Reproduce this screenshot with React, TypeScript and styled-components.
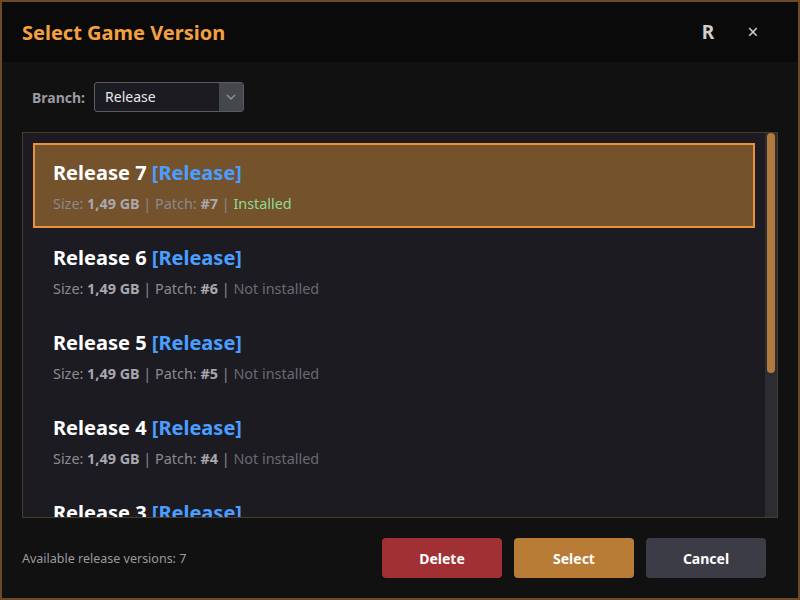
import React from "react";
import styled, { createGlobalStyle } from "styled-components";

const Global = createGlobalStyle`
  html, body { margin: 0; padding: 0; background: #111111; }
  * { box-sizing: border-box; }
  body { font-family: "Noto Sans", "Open Sans", sans-serif; }
`;

const Window = styled.div`
  width: 800px;
  height: 600px;
  border: 2px solid #6b4a28;
  background: #111111;
  display: flex;
  flex-direction: column;
`;

const Header = styled.div`
  height: 60px;
  background: #0a0a0a;
  display: flex;
  align-items: center;
  padding: 0 33px 0 20px;
`;

const Title = styled.h1`
  margin: 0;
  flex: 1;
  font-size: 20px;
  font-weight: 700;
  color: #f5a040;
`;

const HeaderButton = styled.button<{ $bold?: boolean }>`
  background: none;
  border: none;
  color: #cfcfcf;
  font-family: inherit;
  font-size: ${(p) => (p.$bold ? "19px" : "19px")};
  font-weight: ${(p) => (p.$bold ? 700 : 400)};
  width: 24px;
  padding: 0;
  margin-left: 21px;
  cursor: pointer;
`;

const Body = styled.div`
  flex: 1;
  display: flex;
  flex-direction: column;
  padding: 20px 20px 0 20px;
`;

const BranchRow = styled.div`
  display: flex;
  align-items: center;
  gap: 9px;
  padding-left: 10px;
  height: 30px;
`;

const Label = styled.span`
  font-size: 14px;
  font-weight: 700;
  color: #9a9aa0;
`;

const SelectBox = styled.div`
  width: 150px;
  height: 30px;
  border: 1px solid #5a5c60;
  border-radius: 3px;
  background: #1c1b22;
  display: flex;
  overflow: hidden;
`;

const SelectValue = styled.div`
  flex: 1;
  font-size: 14px;
  color: #e8e8e8;
  padding: 0 0 1px 10px;
  display: flex;
  align-items: center;
`;

const SelectArrow = styled.div`
  width: 24px;
  background: #44474c;
  display: flex;
  align-items: center;
  justify-content: center;
`;

const List = styled.div`
  margin-top: 20px;
  height: 386px;
  border: 1px solid #4a3a26;
  background: #1c1b22;
  display: flex;
`;

const Scroller = styled.div`
  flex: 1;
  overflow: hidden;
  padding: 10px;
`;

const ScrollTrack = styled.div`
  width: 12px;
  background: #2c2d33;
  padding: 0 2px;
`;

const ScrollThumb = styled.div`
  height: 240px;
  background: #b07a3e;
  border-radius: 4px;
`;

const Item = styled.div<{ $selected?: boolean }>`
  height: 85px;
  flex-shrink: 0;
  padding: 2px 18px 0 18px;
  border: 2px solid ${(p) => (p.$selected ? "#e8923a" : "transparent")};
  background: ${(p) => (p.$selected ? "#73522c" : "transparent")};
  display: flex;
  flex-direction: column;
  justify-content: center;
  gap: 8px;
`;

const ItemTitle = styled.div`
  font-size: 20px;
  font-weight: 700;
  color: #ffffff;
  line-height: 26px;
`;

const Tag = styled.span`
  color: #4a9eff;
`;

const Meta = styled.div`
  font-size: 14.4px;
  color: #8a8a90;
  line-height: 20px;
`;

const Strong = styled.b`
  color: #a8a8ae;
`;

const Status = styled.span<{ $installed?: boolean }>`
  color: ${(p) => (p.$installed ? "#8fdc8f" : "#6a6a70")};
`;

const Footer = styled.div`
  flex: 1;
  display: flex;
  align-items: center;
  justify-content: space-between;
  padding-right: 12px;
`;

const Count = styled.span`
  font-size: 12.5px;
  color: #9a9aa0;
`;

const Buttons = styled.div`
  display: flex;
  gap: 12px;
`;

const Button = styled.button<{ $variant: "danger" | "primary" | "neutral" }>`
  width: 120px;
  height: 40px;
  border: none;
  border-radius: 4px;
  font-family: inherit;
  font-size: 14px;
  font-weight: 700;
  color: #ffffff;
  cursor: pointer;
  background: ${(p) =>
    p.$variant === "danger" ? "#a03034" : p.$variant === "primary" ? "#b87c37" : "#3c3c46"};
`;

const versions = [7, 6, 5, 4, 3, 2, 1];

export default function App() {
  return (
    <>
      <Global />
      <Window>
        <Header>
          <Title>Select Game Version</Title>
          <HeaderButton $bold>R</HeaderButton>
          <HeaderButton>×</HeaderButton>
        </Header>
        <Body>
          <BranchRow>
            <Label>Branch:</Label>
            <SelectBox>
              <SelectValue>Release</SelectValue>
              <SelectArrow>
                <svg width="10" height="6" viewBox="0 0 10 6">
                  <path d="M1 1 L5 5 L9 1" stroke="#9a9ca0" strokeWidth="1.2" fill="none" />
                </svg>
              </SelectArrow>
            </SelectBox>
          </BranchRow>
          <List>
            <Scroller>
              {versions.map((v) => (
                <Item key={v} $selected={v === 7}>
                  <ItemTitle>
                    Release {v} <Tag>[Release]</Tag>
                  </ItemTitle>
                  <Meta>
                    Size: <Strong>1,49 GB</Strong> | Patch: <Strong>#{v}</Strong> |{" "}
                    <Status $installed={v === 7}>{v === 7 ? "Installed" : "Not installed"}</Status>
                  </Meta>
                </Item>
              ))}
            </Scroller>
            <ScrollTrack>
              <ScrollThumb />
            </ScrollTrack>
          </List>
          <Footer>
            <Count>Available release versions: 7</Count>
            <Buttons>
              <Button $variant="danger">Delete</Button>
              <Button $variant="primary">Select</Button>
              <Button $variant="neutral">Cancel</Button>
            </Buttons>
          </Footer>
        </Body>
      </Window>
    </>
  );
}
